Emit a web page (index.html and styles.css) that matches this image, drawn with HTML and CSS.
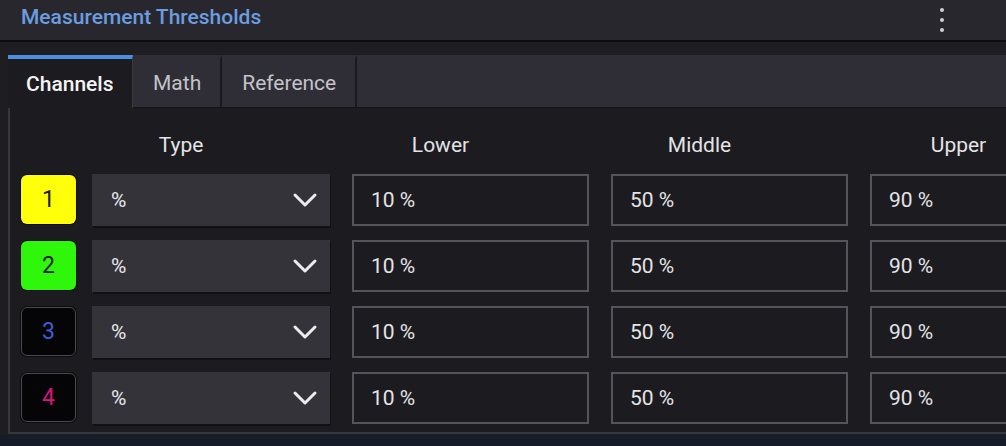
FILE: index.html
```html
<!DOCTYPE html>
<html lang="en">
<head>
  <meta charset="utf-8">
  <title>Measurement Thresholds</title>
  <link rel="stylesheet" href="styles.css">
</head>
<body>
  <div class="header">
    <span class="title">Measurement Thresholds</span>
    <div class="menu"><span></span><span></span><span></span></div>
  </div>

  <div class="section">
    <div class="tabs">
      <div class="tab active">Channels</div>
      <div class="tab">Math</div>
      <div class="tab">Reference</div>
    </div>

    <div class="panel">
      <div class="row heads">
        <div class="badge-space"></div>
        <div class="head type">Type</div>
        <div class="head">Lower</div>
        <div class="head">Middle</div>
        <div class="head">Upper</div>
      </div>

      <div class="row">
        <div class="badge ch1">1</div>
        <div class="select"><span>%</span>
          <svg width="26" height="16" viewBox="0 0 26 16"><path d="M3 3 L13 13 L23 3" fill="none" stroke="#ececec" stroke-width="3" stroke-linecap="round" stroke-linejoin="round"/></svg>
        </div>
        <div class="field">10 %</div>
        <div class="field">50 %</div>
        <div class="field">90 %</div>
      </div>

      <div class="row">
        <div class="badge ch2">2</div>
        <div class="select"><span>%</span>
          <svg width="26" height="16" viewBox="0 0 26 16"><path d="M3 3 L13 13 L23 3" fill="none" stroke="#ececec" stroke-width="3" stroke-linecap="round" stroke-linejoin="round"/></svg>
        </div>
        <div class="field">10 %</div>
        <div class="field">50 %</div>
        <div class="field">90 %</div>
      </div>

      <div class="row">
        <div class="badge ch3">3</div>
        <div class="select"><span>%</span>
          <svg width="26" height="16" viewBox="0 0 26 16"><path d="M3 3 L13 13 L23 3" fill="none" stroke="#ececec" stroke-width="3" stroke-linecap="round" stroke-linejoin="round"/></svg>
        </div>
        <div class="field">10 %</div>
        <div class="field">50 %</div>
        <div class="field">90 %</div>
      </div>

      <div class="row">
        <div class="badge ch4">4</div>
        <div class="select"><span>%</span>
          <svg width="26" height="16" viewBox="0 0 26 16"><path d="M3 3 L13 13 L23 3" fill="none" stroke="#ececec" stroke-width="3" stroke-linecap="round" stroke-linejoin="round"/></svg>
        </div>
        <div class="field">10 %</div>
        <div class="field">50 %</div>
        <div class="field">90 %</div>
      </div>
    </div>
  </div>
</body>
</html>
```

FILE: styles.css
```css
body {
  margin: 0;
  background: #151c28;
  font-family: Roboto, "Liberation Sans", sans-serif;
  overflow: hidden;
}

.header {
  display: flex;
  align-items: center;
  justify-content: space-between;
  height: 34px;
  padding: 0 62px 6px 21px;
  background: #28272d;
  border-bottom: 2px solid #0e0d12;
}

.title {
  color: #6b9de0;
  font-size: 21px;
  font-weight: 500;
}

.menu {
  display: flex;
  flex-direction: column;
  gap: 6px;
  padding-top: 6px;
}

.menu span {
  width: 4px;
  height: 4px;
  border-radius: 50%;
  background: #cfcfd2;
}

.section {
  background: #1e1d22;
  padding: 13px 0 0 8px;
  height: 380px;
  overflow: hidden;
}

.tabs {
  display: flex;
  height: 53px;
  background: #2f2e36;
  border-bottom: 1px solid #141318;
  box-sizing: border-box;
}

.tab {
  display: flex;
  align-items: center;
  padding: 0 19px 0 20px;
  font-size: 21px;
  color: #c4c3c8;
  border-right: 2px solid #1a191e;
  border-top: 4px solid transparent;
  padding-bottom: 1px;
}

.tab.active {
  width: 125px;
  box-sizing: border-box;
  padding: 0 18px;
  color: #f4f4f4;
  font-weight: 500;
  background: #1c1b20;
  border-top-color: #4b8fe2;
  border-right: 1px solid #3a3940;
  margin-bottom: -1px;
}

.panel {
  background: #1c1b20;
  border-left: 2px solid #38373e;
  border-bottom: 2px solid #38373e;
  height: 324px;
  padding: 0 0 0 11px;
  width: 1300px;
}

.row {
  display: flex;
  height: 52px;
  margin-bottom: 14px;
}

.heads {
  height: 66px;
  box-sizing: border-box;
  padding-top: 8px;
  margin-bottom: 0;
  align-items: center;
}

.badge-space {
  width: 71px;
}

.head {
  width: 177px;
  padding-right: 60px;
  margin-right: 22px;
  text-align: center;
  font-size: 21px;
  color: #e4e4e6;
}

.head.type {
  width: 178px;
}

.badge {
  width: 55px;
  height: 49px;
  margin: 1px 16px 0 0;
  box-sizing: border-box;
  border-radius: 6px;
  display: flex;
  align-items: center;
  justify-content: center;
  font-size: 23px;
  box-shadow: 0 0 0 1px #0c0c0e;
}

.ch1 { background: #ffff0a; color: #1a1a1a; }
.ch2 { background: #2ef70c; color: #1a1a1a; }
.ch3 { background: #050507; color: #3d5fd6; border: 1px solid #4a494f; }
.ch4 { background: #050507; color: #d6157a; border: 1px solid #4a494f; }

.select {
  width: 238px;
  box-sizing: border-box;
  display: flex;
  align-items: center;
  justify-content: space-between;
  padding: 0 12px 0 19px;
  margin-right: 22px;
  background: #34333a;
  box-shadow: 1px 2px 0 #111015;
  color: #e8e8ea;
  font-size: 21px;
}

.field {
  width: 237px;
  flex-shrink: 0;
  box-sizing: border-box;
  display: flex;
  align-items: center;
  padding-left: 17px;
  margin-right: 22px;
  border: 2px solid #55545b;
  color: #e4e4e6;
  font-size: 21px;
}
```
